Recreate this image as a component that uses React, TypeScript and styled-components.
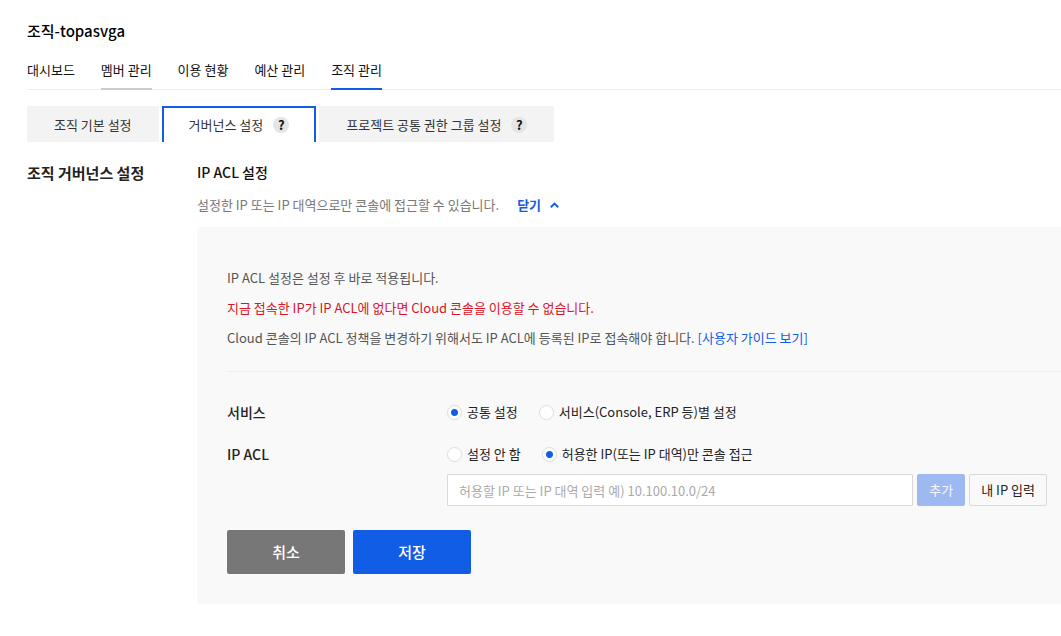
import React, { useState } from "react";
import styled, { createGlobalStyle } from "styled-components";

const GlobalStyle = createGlobalStyle`
  * { box-sizing: border-box; }
  body { margin: 0; background: #fff; color: #222; font: 400 13px/20px "Noto Sans CJK KR", "Noto Sans", sans-serif; }
  h1, h2, h3, p, fieldset { margin: 0; padding: 0; border: 0; }
  button, input { font: inherit; }
  button { cursor: pointer; }
`;

const Page = styled.main`
  padding: 20px 0 32px 27px;
`;

const Title = styled.h1`
  color: #000;
  font-size: 15px;
  line-height: 22px;
  font-weight: 500;
`;

const MainNav = styled.nav`
  display: flex;
  gap: 26px;
  margin-top: 18px;
  border-bottom: 1px solid #eee;
`;

const NavLink = styled.a<{ $line?: string }>`
  height: 30px;
  margin-bottom: -1px;
  border-bottom: 2px solid ${(p) => p.$line || "transparent"};
  color: #111;
  text-decoration: none;
`;

const Tabs = styled.div`
  display: flex;
  gap: 3px;
  margin-top: 16px;
`;

const Tab = styled.button<{ $active?: boolean }>`
  display: flex;
  align-items: center;
  gap: 10px;
  height: 36px;
  padding: 0 25px;
  border: 2px solid ${(p) => (p.$active ? "#125de6" : "#f3f3f3")};
  border-bottom: 0;
  background: ${(p) => (p.$active ? "#fff" : "#f3f3f3")};
  color: #333;
`;

const Help = styled.span`
  width: 16px;
  height: 16px;
  border-radius: 50%;
  background: #e5e5e5;
  color: #111;
  font-size: 13px;
  line-height: 16px;
  font-weight: 700;
  text-align: center;
`;

const Section = styled.section`
  display: grid;
  grid-template-columns: 170px minmax(0, 1fr);
  margin-top: 20px;
`;

const SectionTitle = styled.h2`
  font-size: 15px;
  line-height: 22px;
  font-weight: 700;
`;

const SubTitle = styled.h3`
  font-size: 14px;
  line-height: 20px;
  font-weight: 500;
  color: #111;
`;

const Description = styled.p`
  display: flex;
  gap: 18px;
  margin-top: 13px;
  color: #777;
`;

const Toggle = styled.button`
  display: flex;
  align-items: center;
  gap: 9px;
  padding: 0;
  border: 0;
  background: none;
  color: #125de6;
  font-weight: 700;
`;

const Panel = styled.div`
  margin-top: 12px;
  padding: 36px 0 30px 30px;
  background: #f9f9f9;
`;

const Notice = styled.div`
  margin-bottom: 30px;
  padding-bottom: 18px;
  border-bottom: 1px solid #eee;
  line-height: 30px;
  color: #555;
`;

const Warning = styled.p`
  color: #dc1428;
`;

const GuideLink = styled.a`
  color: #125de6;
  text-decoration: none;
`;

const FormRow = styled.fieldset`
  display: flex;
  margin-top: 22px;
`;

const FormLabel = styled(SubTitle)`
  flex: 0 0 220px;
  color: #222;
`;

const Fields = styled.div`
  flex: 1;
  min-width: 0;
`;

const Options = styled.div`
  display: flex;
  gap: 21px;
`;

const Option = styled.label`
  display: flex;
  align-items: center;
  gap: 5px;
`;

const Radio = styled.input`
  appearance: none;
  width: 15px;
  height: 15px;
  margin: 0;
  border: 1px solid #ddd;
  border-radius: 50%;
  background: #fff;
  &:checked { background: radial-gradient(circle, #125de6 0 3px, #fff 4px); }
`;

const Entry = styled.div`
  display: flex;
  gap: 4px;
  margin: 10px 14px 0 0;
`;

const TextBox = styled.input`
  flex: 1;
  min-width: 0;
  height: 32px;
  padding: 0 11px;
  border: 1px solid #d9d9d9;
  border-radius: 1px;
  background: #fff;
  &::placeholder { color: #aaa; opacity: 1; }
`;

const SmallButton = styled.button<{ $primary?: boolean }>`
  height: 32px;
  padding: 0 11px;
  border: 1px solid ${(p) => (p.$primary ? "#9eb9f2" : "#d9d9d9")};
  border-radius: 2px;
  background: ${(p) => (p.$primary ? "#9eb9f2" : "transparent")};
  color: ${(p) => (p.$primary ? "#f4f7fd" : "#222")};
`;

const Actions = styled.div`
  display: flex;
  gap: 8px;
  margin-top: 24px;
`;

const ActionButton = styled.button<{ $primary?: boolean }>`
  width: 118px;
  height: 44px;
  border: 0;
  border-radius: 2px;
  background: ${(p) => (p.$primary ? "#125de6" : "#777")};
  color: #fff;
  font-size: 15px;
  font-weight: 500;
`;

export default function App() {
  const [service, setService] = useState("common");
  const [access, setAccess] = useState("allowed");
  return (
    <>
      <GlobalStyle />
      <Page>
        <Title>조직-topasvga</Title>
        <MainNav>
          <NavLink href="#dashboard">대시보드</NavLink>
          <NavLink href="#members" $line="#ccc">멤버 관리</NavLink>
          <NavLink href="#usage">이용 현황</NavLink>
          <NavLink href="#budget">예산 관리</NavLink>
          <NavLink href="#organization" $line="#125de6">조직 관리</NavLink>
        </MainNav>
        <Tabs>
          <Tab>조직 기본 설정</Tab>
          <Tab $active>거버넌스 설정<Help>?</Help></Tab>
          <Tab>프로젝트 공통 권한 그룹 설정<Help>?</Help></Tab>
        </Tabs>
        <Section>
          <SectionTitle>조직 거버넌스 설정</SectionTitle>
          <div>
            <SubTitle>IP ACL 설정</SubTitle>
            <Description>
              설정한 IP 또는 IP 대역으로만 콘솔에 접근할 수 있습니다.
              <Toggle>
                닫기
                <svg width="9" height="6" viewBox="0 0 9 6" fill="none" stroke="currentColor" strokeWidth="2"><path d="M.8 5.2L4.5 1.6l3.7 3.6" /></svg>
              </Toggle>
            </Description>
            <Panel>
              <Notice>
                <p>IP ACL 설정은 설정 후 바로 적용됩니다.</p>
                <Warning>지금 접속한 IP가 IP ACL에 없다면 Cloud 콘솔을 이용할 수 없습니다.</Warning>
                <p>Cloud 콘솔의 IP ACL 정책을 변경하기 위해서도 IP ACL에 등록된 IP로 접속해야 합니다. <GuideLink href="#guide">[사용자 가이드 보기]</GuideLink></p>
              </Notice>
              <FormRow aria-label="서비스">
                <FormLabel>서비스</FormLabel>
                <Fields>
                  <Options>
                    <Option><Radio type="radio" name="service" checked={service === "common"} onChange={() => setService("common")} />공통 설정</Option>
                    <Option><Radio type="radio" name="service" checked={service === "each"} onChange={() => setService("each")} />서비스(Console, ERP 등)별 설정</Option>
                  </Options>
                </Fields>
              </FormRow>
              <FormRow aria-label="IP ACL">
                <FormLabel>IP ACL</FormLabel>
                <Fields>
                  <Options>
                    <Option><Radio type="radio" name="access" checked={access === "none"} onChange={() => setAccess("none")} />설정 안 함</Option>
                    <Option><Radio type="radio" name="access" checked={access === "allowed"} onChange={() => setAccess("allowed")} />허용한 IP(또는 IP 대역)만 콘솔 접근</Option>
                  </Options>
                  <Entry>
                    <TextBox aria-label="IP ACL" placeholder="허용할 IP 또는 IP 대역 입력 예) 10.100.10.0/24" />
                    <SmallButton $primary>추가</SmallButton>
                    <SmallButton>내 IP 입력</SmallButton>
                  </Entry>
                </Fields>
              </FormRow>
              <Actions>
                <ActionButton>취소</ActionButton>
                <ActionButton $primary>저장</ActionButton>
              </Actions>
            </Panel>
          </div>
        </Section>
      </Page>
    </>
  );
}
